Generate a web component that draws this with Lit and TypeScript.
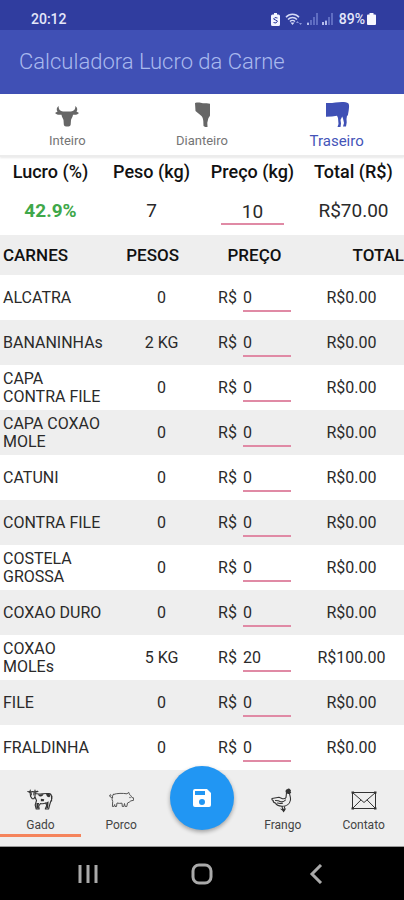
import { LitElement, html, css, svg } from "lit";
import { customElement, state } from "lit/decorators.js";

interface Cut {
  name: string;
  kilos: number;
  price: number;
}

const head = svg`<path d="M9 10.500C6.500 10 4.300 8.500 4.700 5 2.500 6.500 2.200 9 3.500 10.500L1 12c1.500 1.700 4 2 6.500 1.700.2 2 1.500 3.800 2 5.300l.3 4.500c.2 1.300 1 2 2.200 2h2.500c1.200 0 2-.7 2.200-2L17 19c.5-1.500 1.800-3.300 2-5.300 2.500.3 4.500 0 6-1.700l-2.500-1.500c1.300-1.500 1-4-1.200-5.500.4 3.500-1.800 5-4.300 5.500Z"/>`;
const front = svg`<path d="M6 2c4-1 5.500 0 8 .3 3 0 4.500 0 7 .4V14.500c-.8 1.700-1.700 2.500-2 4.200l-.7 3 .2 4.300h-2.300l-1.700-1-.2-5c-.2-2.200-.8-3.800-1.800-5L6.500 10Z"/>`;
const rear = svg`<path d="M2 2c6 .4 11-.8 16-1 2.500 0 5 0 6.500 1.500 1 1.700.5 4 .2 7l-.9 5-.8.2-.5 3.300.2 3.500-.7 4h-3l1-3.500-1-4.500-.8-2-1.700 3.500.5 3.500-.5 3.500h-3l1-3-.5-6-1-2.300L8 15.500l-6 .3Z"/>`;

const cow = svg`<g fill="none" stroke="#333" stroke-width="1.100" stroke-linejoin="round" stroke-linecap="round"><path d="M.8 3.500 3 4.200 3.300 2M8 2v2l3-.5M3 4.200l.6 4.200 1.600 2.400h1.700L8 8.500l.2-4.300C6.500 3.400 4.500 3.500 3 4.200ZM8.200 5.500C12 6.800 17 5 22 5.600c1.700.2 2.500 1.400 2.500 3l.1 4.400M8 9l1.500 3.500-1.300 4.500 1 4h3l-.5-3 1.800-2.500c2 .6 3.500.4 5.200-.6l1 2.600-1.400 3.500h3.300l1.300-5 1-3.200c1.100-1 1.300-2.500 1-4.700"/></g><path fill="#333" d="M11 6.300c2 .5 4 .2 5.500-.2-.3 2-2 2.800-3.600 2.300C11.700 8 11.200 7.300 11 6.300Zm8-.6 3.300.2c1.500 1.200 1 3-.1 3.300-2-.2-2.900-1.500-3.200-3.500ZM3.700 4.500h1l.2 3-1-.2Zm2.700-.1 1.200.2-.3 2.700-1 .2ZM9.500 15h2.700l-.8 2.500.5 3H9.300Zm9.400-.2 2.700-1.500-.5 7h-2l1-3ZM13.900 10.800l3.300.5-.4 1.900-3 .1ZM1.800 3l1.600.5v1.300l-1.600-.4Zm6.700.2 2.200-.6-.1 1.500-2 .5Z"/>`;
const pig = svg`<g transform="translate(1 2)"><g fill="none" stroke="#555" stroke-width="1" stroke-linejoin="round" stroke-linecap="round"><path d="M4.300 4.500C8 3 14 3.200 18 3.800l1.700-1.500.8 2.300c1.500.7 2 2 2.500 3l1.600.3v2.400l-2.800.6c-1 1-2 1.700-3.300 2.100l-.7 3.500h-1.600l-.7-3-.7 3h-1.500l-.3-3.300c-2 .3-3.500.2-5-.2l-.5 3.500H6l-.3-2-.9 2H3.400l.3-5C2.600 9 3 6.500 4.300 4.500ZM3.700 7.500C1.500 8 .5 6.500.8 5c.7-1 1.700 0 1 1"/></g><circle cx="21" cy="7.500" r=".7" fill="#555"/></g>`;
const hen = svg`<g fill="none" stroke="#333" stroke-width="1.100" stroke-linejoin="round" stroke-linecap="round"><path d="M16.500 4.800 16 9.500c-.7 1.200-2 1.500-3.500 1.200L9 9.300 2 10.500c-.5 1 .5 1.800 1.200 2-.2 1.500 1 2.300 2.300 2.500.6 1.600 3.500 3 6.500 3.200 4.500.2 7.800-2.500 8.500-6.200.4-2.500-.8-4-1-7M5.500 12.500c2 0 3.500.2 5 1.200 2 .4 3.700-.2 5-1.700M7.500 15c2 .8 3.500.5 5 .2M12 18.300l.7 3.300m2.300-3.800-1.500 5"/></g><path fill="#333" d="M15.800 4.500c-.8-1.800.3-3.300 1.400-3.300.8-.9 2.500-.8 3 .2 1 .4.900 1.800.3 2.200l.8 1-1.600 1.400c-1.300.2-2.500-.3-3.900-1.500ZM9.800 20.500l3.200.7 3.200-1-1.200 2.300-1.500 2-1-1.700Z"/>`;
const mail = svg`<g fill="none" stroke="#333"><path d="M1.500 4.500h23v16h-23ZM1.500 4.500 13 14.500l11.500-10M1.500 20.500l8.500-8.600m14.500 8.600L16 11.900"/></g><path fill="#333" d="M.5 3.500h2.500v2H.5Zm22.500 0h2.500v2H23Zm-22.500 16h2.500v2H.5Zm22.500 0h2.500v2H23Z"/>`;

@customElement("app-root")
export class AppRoot extends LitElement {
  @state() private cuts: Cut[] = [
    { name: "ALCATRA", kilos: 0, price: 0 },
    { name: "BANANINHAs", kilos: 2, price: 0 },
    { name: "CAPA CONTRA FILE", kilos: 0, price: 0 },
    { name: "CAPA COXAO MOLE", kilos: 0, price: 0 },
    { name: "CATUNI", kilos: 0, price: 0 },
    { name: "CONTRA FILE", kilos: 0, price: 0 },
    { name: "COSTELA GROSSA", kilos: 0, price: 0 },
    { name: "COXAO DURO", kilos: 0, price: 0 },
    { name: "COXAO MOLEs", kilos: 5, price: 20 },
    { name: "FILE", kilos: 0, price: 0 },
    { name: "FRALDINHA", kilos: 0, price: 0 },
  ];
  @state() private cost = 10;
  @state() private tab = 2;

  private tabs = [
    { label: "Inteiro", icon: head },
    { label: "Dianteiro", icon: front },
    { label: "Traseiro", icon: rear },
  ];

  static styles = css`
    :host {
      display: flex;
      flex-direction: column;
      min-height: 100vh;
      background: #fff;
      color: #2a2a2a;
      font-family: Roboto, "Liberation Sans", sans-serif;
      font-size: 16px;
      line-height: 18px;
    }
    * { box-sizing: border-box; }
    svg { display: block; }
    button, input { font: inherit; color: inherit; }
    button { border: 0; padding: 0; background: none; cursor: pointer; }
    .status {
      display: flex;
      align-items: center;
      justify-content: space-between;
      height: 30px;
      padding: 8px 28px 0 31px;
      background: #303d9f;
      color: #e4e7fa;
      font-size: 14px;
      font-weight: 500;
    }
    .signals { display: flex; align-items: center; gap: 5px; }
    .battery { display: flex; align-items: center; gap: 2px; }
    .bar {
      display: flex;
      align-items: center;
      height: 64px;
      padding: 0 19px;
      background: #4050b5;
      color: #a9b9ee;
    }
    h1 { margin: 0; font-size: 22px; line-height: 28px; font-weight: 300; }
    .tabs {
      display: grid;
      grid-template-columns: repeat(3, 1fr);
      height: 63px;
      border-bottom: 2px solid #ececec;
      box-shadow: 0 1px 2px #00000018;
    }
    .tab {
      display: flex;
      flex-direction: column;
      align-items: center;
      gap: 5px;
      padding-top: 7px;
      color: #757575;
      font-size: 13px;
    }
    .tab svg { fill: #666; }
    .tab.active { color: #4454b8; font-size: 15px; }
    .tab.active svg { fill: #3f50b5; }
    table { width: 100%; table-layout: fixed; border-collapse: collapse; }
    th, td { padding: 0; text-align: center; }
    .summary th { height: 30px; font-size: 18px; font-weight: 500; color: #111; }
    .summary td { height: 48px; font-size: 19px; }
    .summary .profit { color: #3fa84a; font-weight: 700; }
    .field {
      width: 48px;
      height: 28px;
      padding: 2px 0 0;
      border: 0;
      border-bottom: 2px solid #e08aa5;
      border-radius: 0;
      background: none;
      outline: none;
    }
    .field.wide { width: 63px; text-align: center; }
    .name { width: 28%; }
    .weight { width: 24%; }
    .price { width: 22%; }
    .cuts thead th { height: 40px; font-size: 17px; font-weight: 500; color: #111; }
    .cuts thead tr, .cuts tbody tr:nth-child(even) { background: #eee; }
    .cuts thead .weight { padding-right: 18px; }
    .cuts thead .total { text-align: right; }
    .cuts .name { padding-left: 3px; text-align: left; }
    .cuts tbody th { font-weight: 400; }
    .cuts tbody .name { padding-right: 10px; }
    .cuts tbody tr { height: 45px; }
    .money { display: flex; align-items: center; justify-content: center; gap: 6px; }
    .dock {
      display: grid;
      grid-template-columns: repeat(5, 1fr);
      height: 77px;
      margin-top: auto;
      background: #eee;
      border-bottom: 1px solid #999;
      color: #444;
      font-size: 12px;
    }
    .item {
      display: flex;
      flex-direction: column;
      align-items: center;
      gap: 3px;
      height: 67px;
      padding-top: 18px;
      border-bottom: 3px solid transparent;
      color: inherit;
      text-decoration: none;
    }
    .item.active { border-color: #f5845c; }
    .slot { position: relative; }
    .save {
      position: absolute;
      top: -4px;
      left: 50%;
      display: grid;
      place-items: center;
      width: 64px;
      height: 64px;
      margin-left: -32px;
      border-radius: 50%;
      background: #2196f3;
      box-shadow: 0 2px 4px #0005;
    }
    .system {
      display: flex;
      justify-content: center;
      gap: 88px;
      height: 53px;
      background: #000;
    }
    .system button { display: grid; place-items: center; width: 26px; }
  `;

  private setPrice(index: number, e: Event) {
    const price = Number((e.target as HTMLInputElement).value) || 0;
    this.cuts = this.cuts.map((c, i) => (i === index ? { ...c, price } : c));
  }

  private navItem(label: string, icon: unknown, active = false) {
    return html`<a class="item ${active ? "active" : ""}" href="#${label.toLowerCase()}">
      <svg width="26" height="25" viewBox="0 0 26 25" aria-hidden="true">${icon}</svg>${label}
    </a>`;
  }

  render() {
    const kilos = this.cuts.reduce((s, c) => s + c.kilos, 0);
    const revenue = this.cuts.reduce((s, c) => s + c.kilos * c.price, 0);
    const total = kilos * this.cost;
    const profit = total ? ((revenue - total) / total) * 100 : 0;
    return html`
      <div class="status">
        <span>20:12</span>
        <div class="signals">
          <svg width="9" height="13" viewBox="0 0 9 13" aria-hidden="true">
            <path fill="#f2f4ff" d="M3 0h3v1.500h1.500a1.500 1.500 0 0 1 1.500 1.500v8.500a1.500 1.500 0 0 1-1.500 1.500h-6A1.500 1.500 0 0 1 0 11.500V3a1.500 1.500 0 0 1 1.500-1.500H3Z"/>
            <path fill="none" stroke="#303d9f" d="M6.500 5 4 4.500 2.500 6l4 2L5 10l-2.500-.5"/>
          </svg>
          <svg width="17" height="13" viewBox="0 0 17 13" aria-hidden="true">
            <g fill="none" stroke="#d5daf6" stroke-width="1.500"><path d="M1 4.300c3.500-4 9.500-4 13 0M3 6.500c2.600-2.700 6.400-2.700 9 0M5 8.500c1.500-1.500 3.500-1.500 5 0"/></g>
            <path fill="#d5daf6" d="m7.500 12-2-2.500h4Z"/><path fill="#8c98da" d="M12 8v4m-1-2 1.500-2L14 10Zm3 0h3l-1.500 2Z"/>
          </svg>
          <svg width="27" height="12" viewBox="0 0 27 12" aria-hidden="true">
            <path fill="#5f6dc2" d="M0 9h2v3H0Zm3-2h2v5H3Zm3-3h2v8H6Zm3-4h2v12H9Zm9 7h2v5h-2Zm3-3h2v8h-2Zm3-4h2v12h-2Z"/>
            <path fill="#b4bdec" d="M0 10h2v2H0Zm15-1h2v3h-2Zm3-1h2v4h-2Z"/>
          </svg>
          <span class="battery">89%
            <svg width="9" height="12" viewBox="0 0 9 12" aria-hidden="true"><path fill="#f7f8ff" d="M2.500 0h4v1.500H8a1 1 0 0 1 1 1V11a1 1 0 0 1-1 1H1a1 1 0 0 1-1-1V2.500a1 1 0 0 1 1-1h1.500Z"/></svg>
          </span>
        </div>
      </div>
      <header class="bar"><h1>Calculadora Lucro da Carne</h1></header>
      <div class="tabs" role="tablist">
        ${this.tabs.map(
          (t, i) => html`<button class="tab ${i === this.tab ? "active" : ""}" role="tab"
            aria-selected=${i === this.tab} @click=${() => (this.tab = i)}>
            <svg width="26" height="26" viewBox="0 0 26 26" aria-hidden="true">${t.icon}</svg>${t.label}
          </button>`
        )}
      </div>
      <main>
        <table class="summary">
          <thead>
            <tr><th scope="col">Lucro (%)</th><th scope="col">Peso (kg)</th><th scope="col">Preço (kg)</th><th scope="col">Total (R$)</th></tr>
          </thead>
          <tbody>
            <tr>
              <td class="profit">${profit.toFixed(1)}%</td>
              <td>${kilos}</td>
              <td><input class="field wide" inputmode="decimal" aria-label="Preço (kg)" .value=${String(this.cost)}
                @change=${(e: Event) => (this.cost = Number((e.target as HTMLInputElement).value) || 0)}></td>
              <td>R$${total.toFixed(2)}</td>
            </tr>
          </tbody>
        </table>
        <table class="cuts">
          <thead>
            <tr><th class="name" scope="col">CARNES</th><th class="weight" scope="col">PESOS</th><th class="price" scope="col">PREÇO</th><th class="total" scope="col">TOTAL</th></tr>
          </thead>
          <tbody>
            ${this.cuts.map(
              (c, i) => html`<tr>
                <th class="name" scope="row">${c.name}</th>
                <td>${c.kilos ? `${c.kilos} KG` : "0"}</td>
                <td><label class="money">R$<input class="field" inputmode="decimal" aria-label="Preço ${c.name}"
                  .value=${String(c.price)} @change=${(e: Event) => this.setPrice(i, e)}></label></td>
                <td>R$${(c.kilos * c.price).toFixed(2)}</td>
              </tr>`
            )}
          </tbody>
        </table>
      </main>
      <nav class="dock">
        ${this.navItem("Gado", cow, true)} ${this.navItem("Porco", pig)}
        <div class="slot">
          <button class="save" aria-label="Salvar">
            <svg width="24" height="24" viewBox="0 0 24 24" aria-hidden="true"><path fill="#fff" d="M17 3H5a2 2 0 0 0-2 2v14a2 2 0 0 0 2 2h14a2 2 0 0 0 2-2V7l-4-4Zm-5 16a3 3 0 1 1 0-6 3 3 0 0 1 0 6Zm3-10H5V5h10v4Z"/></svg>
          </button>
        </div>
        ${this.navItem("Frango", hen)} ${this.navItem("Contato", mail)}
      </nav>
      <div class="system">
        <button aria-label="Recentes"><svg width="20" height="20" viewBox="0 0 20 20"><path stroke="#aaa" stroke-width="3" d="M2 1v18M10 1v18M18 1v18"/></svg></button>
        <button aria-label="Início"><svg width="22" height="22" viewBox="0 0 22 22"><rect x="2" y="2" width="18" height="18" rx="6" fill="none" stroke="#aaa" stroke-width="3"/></svg></button>
        <button aria-label="Voltar"><svg width="20" height="20" viewBox="0 0 20 20"><path fill="none" stroke="#aaa" stroke-width="3" d="m15 1-9 9 9 9"/></svg></button>
      </div>
    `;
  }
}
